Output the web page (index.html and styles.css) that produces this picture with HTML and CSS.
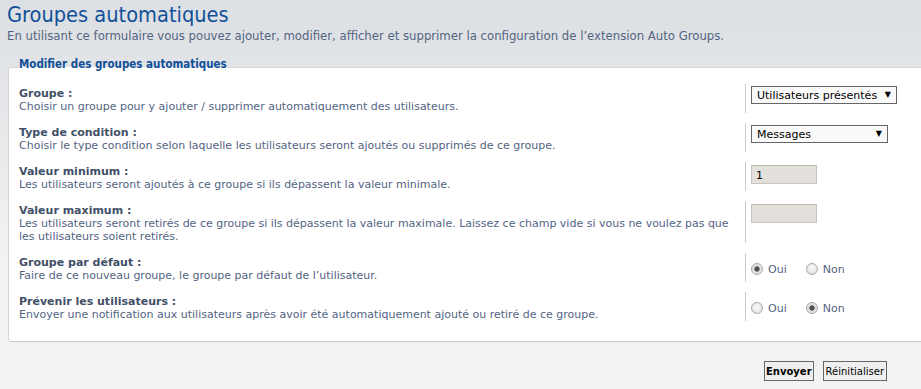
FILE: index.html
```html
<!DOCTYPE html>
<html lang="fr">
<head>
    <meta charset="UTF-8">
    <title>Groupes automatiques</title>
    <link rel="stylesheet" href="styles.css">
</head>
<body>
    <div class="main">
        <h1>Groupes automatiques</h1>
        <p class="intro">En utilisant ce formulaire vous pouvez ajouter, modifier, afficher et supprimer la configuration de l’extension Auto Groups.</p>

        <form id="autogroups" action="#" method="post">
            <fieldset class="panel">
                <legend>Modifier des groupes automatiques</legend>

                <dl>
                    <dt><label for="group_id">Groupe :</label><span class="explain">Choisir un groupe pour y ajouter / supprimer automatiquement des utilisateurs.</span></dt>
                    <dd>
                        <span class="select-wrap">
                            <select id="group_id" name="group_id" class="select-wide">
                                <option selected>Utilisateurs présentés</option>
                            </select>
                        </span>
                    </dd>
                </dl>

                <dl>
                    <dt><label for="type">Type de condition :</label><span class="explain">Choisir le type condition selon laquelle les utilisateurs seront ajoutés ou supprimés de ce groupe.</span></dt>
                    <dd>
                        <span class="select-wrap">
                            <select id="type" name="type" class="select-type">
                                <option selected>Messages</option>
                            </select>
                        </span>
                    </dd>
                </dl>

                <dl>
                    <dt><label for="min_value">Valeur minimum :</label><span class="explain">Les utilisateurs seront ajoutés à ce groupe si ils dépassent la valeur minimale.</span></dt>
                    <dd><input type="number" id="min_value" name="min_value" class="inputbox" value="1"></dd>
                </dl>

                <dl>
                    <dt><label for="max_value">Valeur maximum :</label><span class="explain">Les utilisateurs seront retirés de ce groupe si ils dépassent la valeur maximale. Laissez ce champ vide si vous ne voulez pas que<br>les utilisateurs soient retirés.</span></dt>
                    <dd><input type="number" id="max_value" name="max_value" class="inputbox" value=""></dd>
                </dl>

                <dl>
                    <dt><label>Groupe par défaut :</label><span class="explain">Faire de ce nouveau groupe, le groupe par défaut de l’utilisateur.</span></dt>
                    <dd class="radios">
                        <label class="radio"><input type="radio" name="default" value="1" checked> Oui</label>
                        <label class="radio"><input type="radio" name="default" value="0"> Non</label>
                    </dd>
                </dl>

                <dl>
                    <dt><label>Prévenir les utilisateurs :</label><span class="explain">Envoyer une notification aux utilisateurs après avoir été automatiquement ajouté ou retiré de ce groupe.</span></dt>
                    <dd class="radios">
                        <label class="radio"><input type="radio" name="notify" value="1"> Oui</label>
                        <label class="radio"><input type="radio" name="notify" value="0" checked> Non</label>
                    </dd>
                </dl>
            </fieldset>

            <div class="submit-buttons">
                <input type="submit" class="button1" value="Envoyer">
                <input type="reset" class="button2" value="Réinitialiser">
            </div>
        </form>
    </div>
</body>
</html>
```

FILE: styles.css
```css
:root {
    --blue: #115098;
    --label: #425067;
    --text: #536482;
    --line: #cccccc;
}

* {
    box-sizing: border-box;
}

html, body {
    margin: 0;
    padding: 0;
}

body {
    min-height: 389px;
    overflow: hidden;
    background: linear-gradient(to bottom, #dcdfe3 0, #f2f2f2 260px, #f2f2f2 100%);
    font-family: "DejaVu Sans", Verdana, sans-serif;
    color: var(--text);
}

.main {
    padding: 0 0 0 8px;
}

h1 {
    margin: 0 0 0 -1px;
    padding-top: 1px;
    font-family: "DejaVu Sans Condensed", "DejaVu Sans", sans-serif;
    font-weight: normal;
    font-size: 21.6px;
    line-height: 28px;
    color: var(--blue);
}

.intro {
    margin: 0 0 0 -1px;
    font-size: 11.7px;
    line-height: 14px;
}

/* panel */
fieldset.panel {
    margin: 17px -6px 0 0;
    padding: 10px;
    background-color: #ffffff;
    border-top: 1px solid #d7d7d7;
    border-left: 1px solid #d7d7d7;
    border-right: 1px solid var(--line);
    border-bottom: 1px solid var(--line);
    border-radius: 3px;
}

legend {
    padding: 0;
    font-family: "DejaVu Sans Condensed", "DejaVu Sans", sans-serif;
    font-weight: bold;
    font-size: 11.5px;
    line-height: 14px;
    color: var(--blue);
    position: relative;
    top: -3px;
}

dl {
    display: grid;
    grid-template-columns: 727px 1fr;
    margin: 0 0 10px 0;
    font-size: 11px;
}

dt {
    padding-top: 3px;
    line-height: 13px;
    border-right: 1px solid var(--line);
}

dt label {
    display: block;
    font-weight: bold;
    color: var(--label);
}

.explain {
    display: block;
    color: var(--text);
}

dd {
    margin: 0;
    padding: 2px 0 0 5px;
}

/* form controls */
.select-wrap {
    position: relative;
    display: inline-block;
}

.select-wrap::after {
    content: "\25BC";
    position: absolute;
    right: 6px;
    top: 4px;
    font-size: 8px;
    line-height: 10px;
    color: #000;
    pointer-events: none;
}

select {
    appearance: none;
    -webkit-appearance: none;
    height: 18px;
    margin: 0;
    padding: 0 0 0 5px;
    border: 1px solid #666666;
    border-radius: 0;
    background-color: #fafafa;
    font-family: "DejaVu Sans", Verdana, sans-serif;
    font-size: 11px;
    color: #000;
}

.select-wide {
    width: 146px;
}

.select-type {
    width: 137px;
}

.inputbox {
    appearance: textfield;
    -moz-appearance: textfield;
    width: 66px;
    height: 19px;
    margin: 1px 0 0 0;
    padding: 1px 4px 0;
    border: 1px solid #c9c4bd;
    border-top-color: #bdb8b1;
    background-color: #e3e0db;
    font-family: "DejaVu Sans", Verdana, sans-serif;
    font-size: 11px;
    color: #000;
}

.inputbox::-webkit-inner-spin-button,
.inputbox::-webkit-outer-spin-button {
    -webkit-appearance: none;
    margin: 0;
}

.radios {
    display: flex;
    gap: 19px;
    padding-top: 3px;
}

.radio {
    display: inline-flex;
    align-items: center;
    gap: 5px;
    font-size: 11px;
    line-height: 13px;
    color: var(--text);
}

.radio input {
    appearance: none;
    -webkit-appearance: none;
    width: 12px;
    height: 12px;
    margin: 0;
    border: 1px solid #a9a9a9;
    border-radius: 50%;
    background: radial-gradient(circle at 50% 40%, #fafafa 0, #e4e4e4 70%, #d6d6d6 100%);
}

.radio input:checked {
    background: radial-gradient(circle, #4d4d4d 0, #555555 2.3px, #dcdcdc 3px, #efefef 100%);
}

/* buttons */
.submit-buttons {
    display: flex;
    justify-content: flex-end;
    gap: 9px;
    padding: 19px 34px 0 0;
}

.button1,
.button2 {
    height: 20px;
    margin: 0;
    padding: 0 2px;
    border: 1px solid #666666;
    border-radius: 0;
    background: #efefef;
    font-family: "DejaVu Sans", Verdana, sans-serif;
    font-size: 10px;
    color: #000;
}

.button1 {
    padding: 0 1px;
    font-weight: bold;
}
```
